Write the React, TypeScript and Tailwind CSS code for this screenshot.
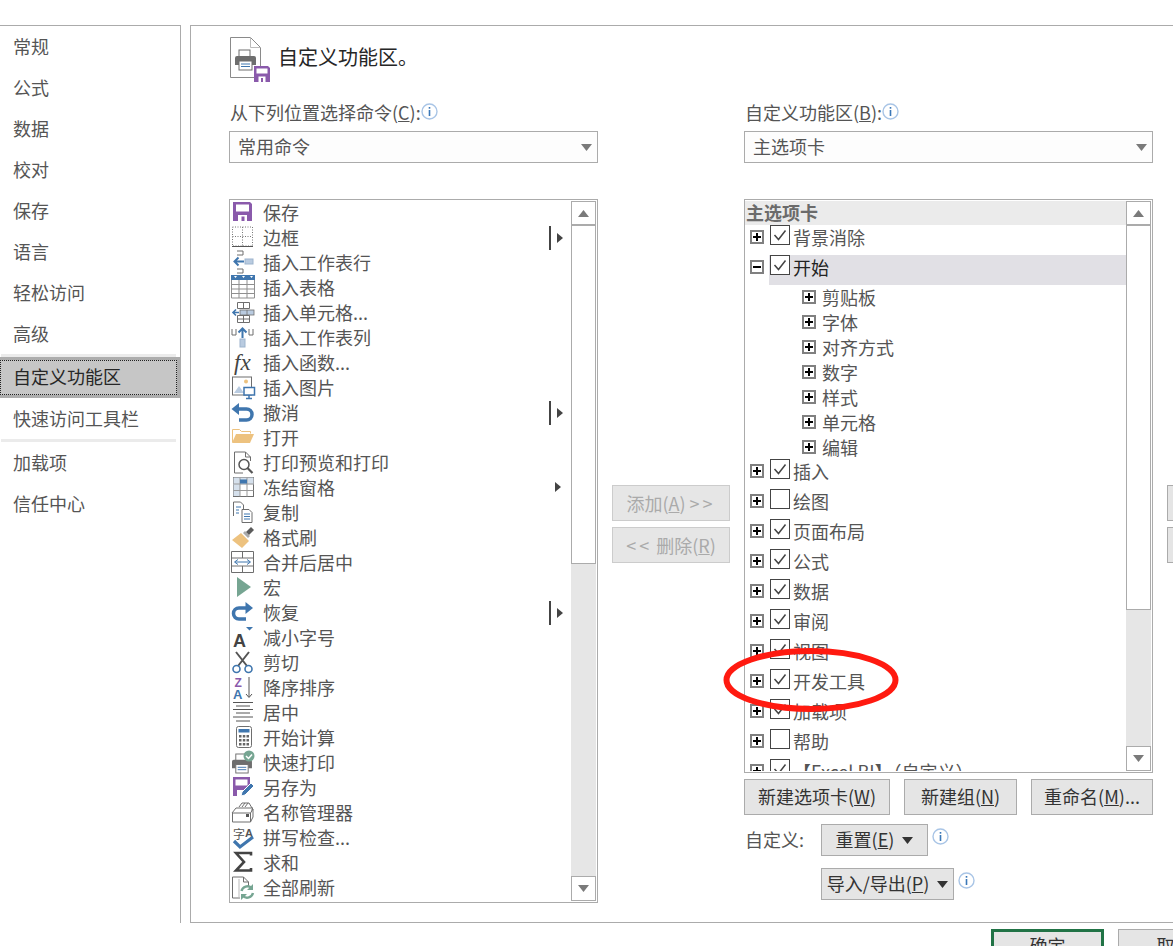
import type { ReactNode } from 'react'

const blue = '#3f76ae'
const gray = '#6e6e6e'
const purple = '#8a5aab'
const orange = '#edc27f'
const green = '#76a592'
const pale = '#b9cbe0'

function Ico({ children }: { children: ReactNode }) {
  return (
    <svg width="25" height="25" viewBox="0 0 25 25" fill="none" className="shrink-0 overflow-visible">
      {children}
    </svg>
  )
}

function Floppy({ x = 2, y = 1 }: { x?: number; y?: number }) {
  return (
    <g transform={`translate(${x} ${y})`}>
      <path d="M0 0h17l2 2v17H0z" fill={purple} />
      <rect x="3" y="2.500" width="13" height="7" fill="#fff" />
      <rect x="5" y="13" width="9" height="6" fill="#fff" />
      <rect x="8.500" y="14.500" width="3" height="4.500" fill={purple} />
    </g>
  )
}

function Printer() {
  return (
    <g>
      <rect x="4" y="0" width="11" height="7" fill="#fff" stroke={gray} />
      <path d="M2 6h17a2 2 0 0 1 2 2v7h-4v-3H4v3H0V8a2 2 0 0 1 2-2z" fill={gray} />
      <rect x="4" y="11" width="13" height="9" fill="#fff" stroke={gray} />
      <path d="M6 14h9M6 16.500h9" stroke={blue} />
    </g>
  )
}

const commands: { label: string; icon: ReactNode; arrow?: 'bar' | 'plain' }[] = [
  { label: '保存', icon: <Floppy /> },
  {
    label: '边框',
    arrow: 'bar',
    icon: (
      <>
        <path d="M1.500 1h20v19h-20zM11.500 1v19M1.500 10.500h20" stroke="#777" strokeDasharray="1 1.500" />
        <path d="M1 20.500h21" stroke="#555" />
      </>
    ),
  },
  {
    label: '插入工作表行',
    icon: (
      <>
        <path d="M6 0h6v4H6M6 18h6v4H6" stroke={gray} />
        <rect x="14" y="8" width="8" height="5" fill={pale} stroke="#9db4cd" />
        <path d="M13 10.500H4M7.500 6.500l-4 4 4 4" stroke={blue} strokeWidth="2" />
      </>
    ),
  },
  {
    label: '插入表格',
    icon: (
      <>
        <rect x="0" y="-1" width="24" height="5" fill={blue} />
        <path d="M0.500 4v18h23V4M0.500 8.500h23M0.500 13h23M0.500 17.500h23M8 4v18M16 4v18" stroke="#8f8f8f" />
        <path d="M3 0h3l-1.500 2zM11 0h3l-1.500 2zM19 0h3l-1.500 2z" fill="#fff" />
      </>
    ),
  },
  {
    label: '插入单元格...',
    icon: (
      <>
        <path d="M6.500 1.500h12v6h-12zM12.500 1.500v6M6.500 14.500h12v7h-12zM12.500 14.500v7M6.500 18h12" stroke={gray} />
        <path d="M2 11.500h6M5 8.500l-3 3 3 3" stroke={blue} strokeWidth="1.600" />
        <rect x="9" y="9" width="14" height="5" fill={pale} stroke={gray} strokeWidth="0.800" />
        <path d="M16 9v5" stroke={gray} strokeWidth="0.800" />
      </>
    ),
  },
  {
    label: '插入工作表列',
    icon: (
      <>
        <path d="M1 3v6h4V3M18 3v6h4V3" stroke={gray} />
        <rect x="9" y="13" width="5" height="8" fill={pale} stroke="#9db4cd" />
        <path d="M11.500 12V3M7.500 6.500l4-4 4 4" stroke={blue} strokeWidth="2" />
      </>
    ),
  },
  {
    label: '插入函数...',
    icon: (
      <text x="3" y="19" fontFamily="Liberation Serif, serif" fontStyle="italic" fontSize="23" fill="#444">
        fx
      </text>
    ),
  },
  {
    label: '插入图片',
    icon: (
      <>
        <rect x="1.500" y="1" width="19" height="18" fill="#fff" stroke={gray} />
        <circle cx="15" cy="5.500" r="2" fill={orange} />
        <path d="M3 17l5-7 5 7z" fill={pale} />
        <rect x="13" y="11.500" width="10.500" height="7.500" fill="#fff" stroke={blue} strokeWidth="1.500" />
        <path d="M18 19v3M15 22.500h6" stroke={blue} strokeWidth="1.500" />
      </>
    ),
  },
  {
    label: '撤消',
    arrow: 'bar',
    icon: (
      <>
        <path d="M7 8h8.500a5.500 5.500 0 0 1 0 11H8" stroke={blue} strokeWidth="3.500" />
        <path d="M0.500 8L8 2v12z" fill={blue} />
      </>
    ),
  },
  {
    label: '打开',
    icon: (
      <>
        <path d="M1.500 16V3.500h7l2 2h9v2" stroke={orange} fill="#fff" />
        <path d="M1 17l4-9h18l-4 9z" fill={orange} />
      </>
    ),
  },
  {
    label: '打印预览和打印',
    icon: (
      <>
        <path d="M3.500 22V1h11l5 5v4M14.500 1v5h5M3.500 22H12" stroke={gray} />
        <circle cx="13" cy="13.500" r="5" fill="#fff" stroke="#555" strokeWidth="1.500" />
        <path d="M16.500 17l5 5" stroke="#555" strokeWidth="2.200" />
      </>
    ),
  },
  {
    label: '冻结窗格',
    arrow: 'plain',
    icon: (
      <>
        <rect x="2.500" y="1.500" width="20" height="19" fill="#fff" stroke={gray} />
        <rect x="2.500" y="1.500" width="20" height="7" fill="#d5e0ec" />
        <rect x="2.500" y="8" width="6.500" height="12" fill="#d5e0ec" />
        <path d="M2.500 8h20M2.500 14.500h20M9 1.500v19M16 1.500v19" stroke="#999" />
        <rect x="9" y="3.500" width="7" height="4" fill={blue} />
      </>
    ),
  },
  {
    label: '复制',
    icon: (
      <>
        <path d="M2.500 15V1h7l3 3v4" stroke={gray} />
        <path d="M5 6h5M5 9h3M5 12h3" stroke={blue} />
        <path d="M11 8.500h7l3 3v10H11z" fill="#fff" stroke={gray} />
        <path d="M13 13h6M13 15.500h6M13 18h6" stroke={blue} />
      </>
    ),
  },
  {
    label: '格式刷',
    icon: (
      <>
        <path d="M1 14l9-7 8 8-7 7z" fill={orange} />
        <path d="M12 7l5 5 2-2-5-5z" fill="#aaa" />
        <path d="M15 6l5-5 3 3-5 5z" fill="#5b5b5b" />
      </>
    ),
  },
  {
    label: '合并后居中',
    icon: (
      <>
        <path d="M0.500 0.500h22v21h-22zM0.500 7h22M0.500 15h22M11.500 0.500V7M11.500 15v6.500" stroke={gray} />
        <path d="M4 11h15M7 8.500L3.500 11 7 13.500M16 8.500l3.500 2.500-3.500 2.500" stroke={blue} />
      </>
    ),
  },
  { label: '宏', icon: <path d="M6 1l14 10-14 10z" fill={green} /> },
  {
    label: '恢复',
    arrow: 'bar',
    icon: (
      <>
        <path d="M16 7H8a5.500 5.500 0 0 0 0 11h7" stroke={blue} strokeWidth="3.500" />
        <path d="M22 7l-7.500-6v12z" fill={blue} />
      </>
    ),
  },
  {
    label: '减小字号',
    icon: (
      <>
        <text x="2" y="21" fontFamily="Liberation Sans, sans-serif" fontWeight="700" fontSize="18" fill="#444">
          A
        </text>
        <path d="M15 1h7l-3.500 3.500z" fill={blue} />
      </>
    ),
  },
  {
    label: '剪切',
    icon: (
      <>
        <path d="M5 1l11 14M18 1L7 15" stroke="#555" strokeWidth="2" />
        <circle cx="5.500" cy="18" r="3.500" stroke={blue} strokeWidth="1.600" fill="#fff" />
        <circle cx="17.500" cy="18" r="3.500" stroke={blue} strokeWidth="1.600" fill="#fff" />
      </>
    ),
  },
  {
    label: '降序排序',
    icon: (
      <>
        <text x="3.500" y="10.500" fontFamily="Liberation Sans, sans-serif" fontWeight="700" fontSize="12" fill={purple}>
          Z
        </text>
        <text x="2" y="23" fontFamily="Liberation Sans, sans-serif" fontWeight="700" fontSize="13" fill={blue}>
          A
        </text>
        <path d="M18 1v20M15 18l3 3.500 3-3.500" stroke="#555" />
      </>
    ),
  },
  {
    label: '居中',
    icon: <path d="M2 1.500h20M5 5h14M2 8.500h20M5 12h14M2 16h20M5 20h14" stroke="#555" />,
  },
  {
    label: '开始计算',
    icon: (
      <>
        <rect x="5.500" y="0.500" width="15" height="21" rx="2" fill="#fff" stroke={gray} />
        <rect x="7.500" y="3" width="11" height="3.500" fill={blue} />
        <path
          d="M8 9h2.500v2.500H8zM11.800 9h2.500v2.500h-2.500zM15.500 9H18v2.500h-2.500zM8 13h2.500v2.500H8zM11.800 13h2.500v2.500h-2.500zM15.500 13H18v2.500h-2.500zM8 17h2.500v2.500H8zM11.800 17h2.500v2.500h-2.500zM15.500 17H18v2.500h-2.500z"
          fill="#666"
        />
      </>
    ),
  },
  {
    label: '快速打印',
    icon: (
      <>
        <g transform="translate(1 3) scale(0.95)">
          <Printer />
        </g>
        <circle cx="18" cy="5" r="5.500" fill={green} />
        <path d="M15 5l2.500 2.500 3.500-4" stroke="#fff" strokeWidth="1.500" />
      </>
    ),
  },
  {
    label: '另存为',
    icon: (
      <>
        <path d="M2 1h17v7l-7 12H2z" fill={purple} />
        <rect x="4.500" y="3.500" width="12" height="6" fill="#fff" />
        <rect x="6" y="14" width="6" height="6" fill="#fff" />
        <path d="M10 20l1-4 9-9 3 3-9 9z" fill={blue} stroke="#fff" />
      </>
    ),
  },
  {
    label: '名称管理器',
    icon: (
      <>
        <path d="M8 6l3-4h7l3 5M11 6l3-4M14 6l3-4" stroke={gray} />
        <path d="M1 12l4-5h17l-1 1v7" stroke={gray} fill="#fff" />
        <path d="M1.500 12h18v9h-18zM19.500 12l2.500-4v8l-2.500 5" stroke={gray} fill="#fff" />
        <rect x="15" y="13" width="3" height="3" fill="#555" />
      </>
    ),
  },
  {
    label: '拼写检查...',
    icon: (
      <>
        <text x="2" y="13" fontFamily="Noto Sans CJK SC, sans-serif" fontSize="12" fill="#555">
          字
        </text>
        <text x="14" y="11" fontFamily="Liberation Sans, sans-serif" fontWeight="700" fontSize="11" fill="#555">
          A
        </text>
        <path d="M3 15l6 6 13-10" stroke={blue} strokeWidth="3.200" />
      </>
    ),
  },
  {
    label: '求和',
    icon: <path d="M20 4.500V2H5l8 9-8 8.500h15V17" stroke="#444" strokeWidth="2.600" />,
  },
  {
    label: '全部刷新',
    icon: (
      <>
        <path d="M1.500 22V1h11l5 5v5M12.500 1v5h5M1.500 22H9" stroke={gray} />
        <path d="M8 3v20" stroke="#bbb" />
        <path d="M10.500 15a6 6 0 0 1 10-3M22 17a6 6 0 0 1-10 3" stroke={green} strokeWidth="2.400" />
        <path d="M22 8v6h-6zM10 24v-6h6z" fill={green} />
      </>
    ),
  },
]

const navTop = ['常规', '公式', '数据', '校对', '保存', '语言', '轻松访问', '高级']

function Tri({ down = true, color = '#7a7a7a' }: { down?: boolean; color?: string }) {
  return (
    <svg width="11" height="7" viewBox="0 0 11 7" className="shrink-0">
      <path d={down ? 'M0 0h11L5.500 7z' : 'M0 7h11L5.500 0z'} fill={color} />
    </svg>
  )
}

function Info() {
  return (
    <svg width="17" height="17" viewBox="0 0 17 17" className="shrink-0">
      <circle cx="8.500" cy="8.500" r="7.500" fill="#fff" stroke="#a9c5e6" strokeWidth="1.400" />
      <rect x="7.700" y="7" width="1.600" height="6" fill="#3b78b8" />
      <rect x="7.700" y="4" width="1.600" height="1.700" fill="#3b78b8" />
    </svg>
  )
}

function Scrollbar({ thumb }: { thumb: number }) {
  return (
    <div className="w-[25px] shrink-0 flex flex-col">
      <div className="h-[25px] shrink-0 border border-[#ababab] border-b-2 bg-white flex items-center justify-center">
        <Tri down={false} />
      </div>
      <div className="shrink-0 border-x border-b border-[#ababab] bg-white" style={{ height: thumb }} />
      <div className="flex-1 bg-[#e6e6e6]" />
      <div className="h-[25px] shrink-0 border border-[#ababab] bg-white flex items-center justify-center">
        <Tri />
      </div>
    </div>
  )
}

function Expander({ open = false, className = '' }: { open?: boolean; className?: string }) {
  return (
    <svg width="14" height="14" viewBox="0 0 14 14" className={`shrink-0 ${className}`}>
      <rect x="1" y="1" width="12" height="12" fill="#fff" stroke="#808080" strokeWidth="2" />
      <path d={open ? 'M3 7h8' : 'M3 7h8M7 3v8'} stroke="#000" strokeWidth="2" />
    </svg>
  )
}

function TabRow({ label, checked = true, open = false, active = false }: { label: string; checked?: boolean; open?: boolean; active?: boolean }) {
  return (
    <div className="h-[30px] shrink-0 flex items-center pl-[5px] gap-[5px]">
      <Expander open={open} className="mb-[6px]" />
      <div className={`flex-1 h-full flex items-center pl-px pb-[6px] whitespace-nowrap ${active ? 'bg-[#e1e0e5] text-[#222]' : ''}`}>
        <div className="w-[20px] h-[20px] mb-[4px] mr-[3px] shrink-0 border border-[#444] bg-white">
          {checked && (
            <svg width="18" height="18" viewBox="0 0 18 18">
              <path d="M3.500 9l4 4.500 7-9" fill="none" stroke="#444" strokeWidth="1.500" />
            </svg>
          )}
        </div>
        {label}
      </div>
    </div>
  )
}

function SubRow({ label, last = false }: { label: string; last?: boolean }) {
  return (
    <div className={`${last ? 'h-[24px] pb-px' : 'h-[25px] pb-[2px]'} shrink-0 flex items-center pl-[57px] gap-[6px]`}>
      <Expander />
      {label}
    </div>
  )
}

function Btn({ children, className = '' }: { children: ReactNode; className?: string }) {
  return (
    <div className={`border border-[#ababab] bg-[#e5e5e5] text-[#333] flex items-center justify-center whitespace-nowrap pb-[2px] ${className}`}>
      {children}
    </div>
  )
}

function NavItem({ label }: { label: string }) {
  return <div className="h-[41px] flex items-center pl-[13px] pb-[2px]">{label}</div>
}

export default function App() {
  return (
    <div className="w-[1173px] h-[946px] overflow-hidden relative bg-white pt-[25px] text-[18px] leading-[24px] text-[#555] font-['Noto_Sans_CJK_SC','Noto_Sans',sans-serif]">
      <div className="flex h-[898px]">
        {/* left nav */}
        <div className="w-[181px] shrink-0 border-t border-r border-[#ababab]">
          {navTop.map(n => (
            <NavItem key={n} label={n} />
          ))}
          <div className="h-[3px] ml-px mr-[4px] bg-[#ebebeb]" />
          <div className="h-[41px] bg-[#c6c6c6] border-y-[3px] border-r-[3px] border-[#adadad] flex items-center">
            <div className="w-full h-full border border-dotted border-[#222] flex items-center pl-[12px] pb-[3px] text-[#262626]">自定义功能区</div>
          </div>
          <NavItem label="快速访问工具栏" />
          <div className="h-[3px] ml-px mr-[4px] bg-[#ebebeb]" />
          <NavItem label="加载项" />
          <NavItem label="信任中心" />
        </div>

        <div className="w-[9px] shrink-0" />

        {/* right panel */}
        <div className="flex-1 min-w-0 border-l border-t border-b border-[#ababab] pl-[38px] overflow-hidden">
          <div className="h-[75px] flex items-start pt-[11px]">
            <svg width="42" height="46" viewBox="0 0 42 46" className="ml-px shrink-0">
              <path d="M0.500 0.500h20l10 10v30H0.500z" fill="#fff" stroke="#8a8a8a" />
              <path d="M20.500 0.500v10h10" fill="none" stroke="#bbb" />
              <g transform="translate(5 13)">
                <Printer />
              </g>
              <g transform="translate(24 29)">
                <path d="M0 0h14l2 2v14H0z" fill={purple} />
                <rect x="2.500" y="2.500" width="11" height="5" fill="#fff" />
                <rect x="4.500" y="10.500" width="7" height="5.500" fill="#fff" />
                <rect x="7" y="12" width="2" height="4" fill={purple} />
              </g>
            </svg>
            <div className="ml-[6px] mt-[8px] text-[20px] text-[#262626]">自定义功能区。</div>
          </div>

          <div className="flex w-[1100px]">
            {/* commands column */}
            <div className="w-[369px] shrink-0">
              <div className="h-[24px] mb-[6px] pl-px flex whitespace-nowrap leading-[22px]">
                从下列位置选择命令(<u>C</u>):
                <span className="mt-[2px]">
                  <Info />
                </span>
              </div>
              <div className="h-[32px] mb-[36px] border border-[#ababab] bg-[#fdfdfd] flex items-center justify-between pl-[8px] pr-[5px]">
                <span className="-mt-[2px]">常用命令</span>
                <Tri />
              </div>
              <div className="h-[704px] border border-[#ababab] flex pr-px py-px">
                <div className="flex-1 min-w-0 pl-px">
                  {commands.map(c => (
                    <div key={c.label} className="h-[25px] flex items-center">
                      <Ico>{c.icon}</Ico>
                      <span className="ml-[7px] -mt-[4px] whitespace-nowrap">{c.label}</span>
                      {c.arrow === 'bar' && (
                        <div className="ml-auto mr-[8px] mb-[2px] flex items-center">
                          <div className="w-[2px] h-[24px] bg-[#444] mr-[6px]" />
                          <svg width="6" height="10" viewBox="0 0 6 10">
                            <path d="M0 0l6 5-6 5z" fill="#444" />
                          </svg>
                        </div>
                      )}
                      {c.arrow === 'plain' && (
                        <svg width="6" height="10" viewBox="0 0 6 10" className="ml-auto mr-[10px] mb-[3px]">
                          <path d="M0 0l6 5-6 5z" fill="#444" />
                        </svg>
                      )}
                    </div>
                  ))}
                </div>
                <Scrollbar thumb={338} />
              </div>
            </div>

            {/* add / remove */}
            <div className="w-[146px] shrink-0 pl-[14px] pr-[14px] pt-[384px] flex flex-col gap-[6px]">
              <div className="h-[36px] border border-[#ccc] bg-[#e6e6e6] text-[#aaa] flex items-center justify-center whitespace-nowrap">
                添加(<u>A</u>)&nbsp;<span className="tracking-[3px]">&gt;&gt;</span>
              </div>
              <div className="h-[36px] border border-[#ccc] bg-[#e6e6e6] text-[#aaa] flex items-center justify-center whitespace-nowrap">
                <span className="tracking-[3px]">&lt;&lt;</span>&nbsp;删除(<u>R</u>)
              </div>
            </div>

            {/* ribbon column */}
            <div className="w-[409px] shrink-0">
              <div className="h-[24px] mb-[6px] pl-px flex whitespace-nowrap leading-[22px]">
                自定义功能区(<u>B</u>):
                <span className="mt-[2px]">
                  <Info />
                </span>
              </div>
              <div className="h-[32px] mb-[36px] border border-[#ababab] bg-[#fdfdfd] flex items-center justify-between pl-[8px] pr-[5px]">
                <span className="-mt-[2px]">主选项卡</span>
                <Tri />
              </div>
              <div className="h-[574px] border border-[#ababab] flex pr-px py-px">
                <div className="flex-1 min-w-0 overflow-hidden flex flex-col">
                  <div className="h-[24px] shrink-0 bg-[#ebebeb] pl-px leading-[22px] font-bold text-[#6b6b6b]">主选项卡</div>
                  <TabRow label="背景消除" />
                  <TabRow label="开始" open active />
                  <SubRow label="剪贴板" />
                  <SubRow label="字体" />
                  <SubRow label="对齐方式" />
                  <SubRow label="数字" />
                  <SubRow label="样式" />
                  <SubRow label="单元格" />
                  <SubRow label="编辑" last />
                  <TabRow label="插入" />
                  <TabRow label="绘图" checked={false} />
                  <TabRow label="页面布局" />
                  <TabRow label="公式" />
                  <TabRow label="数据" />
                  <TabRow label="审阅" />
                  <TabRow label="视图" />
                  <TabRow label="开发工具" />
                  <TabRow label="加载项" />
                  <TabRow label="帮助" checked={false} />
                  <TabRow label="【Excel BI】（自定义）" />
                </div>
                <Scrollbar thumb={384} />
              </div>

              <div className="flex justify-between mt-[6px]">
                <Btn className="w-[146px] h-[36px]">
                  新建选项卡(<u>W</u>)
                </Btn>
                <Btn className="w-[113px] h-[36px]">
                  新建组(<u>N</u>)
                </Btn>
                <Btn className="w-[122px] h-[36px]">
                  重命名(<u>M</u>)...
                </Btn>
              </div>
              <div className="flex items-start mt-[9px]">
                <div className="w-[77px] h-[32px] flex items-center pl-px pb-[2px]">自定义:</div>
                <Btn className="w-[107px] h-[32px] gap-[8px]">
                  <span>
                    重置(<u>E</u>)
                  </span>
                  <span className="mt-[2px] flex">
                    <Tri color="#333" />
                  </span>
                </Btn>
                <span className="ml-[4px] mt-[4px]">
                  <Info />
                </span>
              </div>
              <div className="flex items-start mt-[12px] pl-[77px]">
                <Btn className="w-[133px] h-[32px] gap-[8px]">
                  <span>
                    导入/导出(<u>P</u>)
                  </span>
                  <span className="mt-[2px] flex">
                    <Tri color="#333" />
                  </span>
                </Btn>
                <span className="ml-[4px] mt-[4px]">
                  <Info />
                </span>
              </div>
            </div>

            {/* move up / down */}
            <div className="pl-[14px] pt-[384px] flex flex-col gap-[6px]">
              <Btn className="w-[60px] h-[36px]"> </Btn>
              <Btn className="w-[60px] h-[36px]"> </Btn>
            </div>
          </div>
        </div>
      </div>

      {/* dialog footer */}
      <div className="flex gap-[14px] pl-[991px] pt-[6px] w-[1400px]">
        <div className="w-[113px] h-[40px] shrink-0 border-[3px] border-[#217346] bg-[#e5e5e5] text-[#333] flex items-start justify-center pt-[1px]">确定</div>
        <div className="w-[113px] h-[40px] shrink-0 border border-[#ababab] bg-[#e5e5e5] text-[#333] flex items-start justify-center pt-[3px]">取消</div>
      </div>

      {/* red hand drawn mark */}
      <svg width="182" height="68" viewBox="0 0 182 68" className="absolute left-[720px] top-[646px] pointer-events-none">
        <ellipse cx="91" cy="34" rx="84.500" ry="29" fill="none" stroke="#ff1a10" strokeWidth="6" />
      </svg>
    </div>
  )
}
